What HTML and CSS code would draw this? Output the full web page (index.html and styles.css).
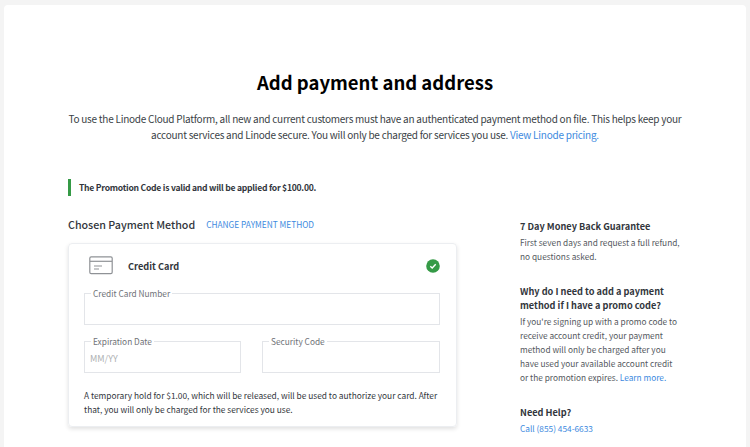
FILE: index.html
```html
<!DOCTYPE html>
<html lang="en">
<head>
<meta charset="utf-8">
<title>Add payment and address</title>
<link rel="stylesheet" href="styles.css">
</head>
<body>
<main class="sheet">
  <h1 class="title">Add payment and address</h1>
  <p class="intro">To use the Linode Cloud Platform, all new and current customers must have an authenticated payment method on file. This helps keep your account services and Linode secure. You will only be charged for services you use. <a href="#">View Linode pricing.</a></p>
  <div class="notice">The Promotion Code is valid and will be applied for $100.00.</div>
  <div class="columns">
    <section class="payment">
      <div class="payment-head">
        <h2>Chosen Payment Method</h2>
        <a href="#">CHANGE PAYMENT METHOD</a>
      </div>
      <div class="card">
        <div class="card-head">
          <svg class="card-icon" width="24" height="19" viewBox="0 0 24 19" fill="none" stroke="#8f9296" stroke-width="1.2">
            <rect x="0.8" y="0.8" width="22.4" height="16.8" rx="1.4"/>
            <path d="M1 5.3H23"/>
            <path d="M5 10H13M5 13H10"/>
          </svg>
          <span class="card-name">Credit Card</span>
          <svg class="check" width="14" height="14" viewBox="0 0 14 14">
            <circle cx="7" cy="7" r="6.8" fill="#359a46"/>
            <path d="M4.3 7.2L6.2 9L9.7 5.2" fill="none" stroke="#fff" stroke-width="1.4"/>
          </svg>
        </div>
        <fieldset class="field"><legend>Credit Card Number</legend></fieldset>
        <div class="field-row">
          <fieldset class="field"><legend>Expiration Date</legend><span class="placeholder">MM/YY</span></fieldset>
          <fieldset class="field"><legend>Security Code</legend></fieldset>
        </div>
        <p class="hold">A temporary hold for $1.00, which will be released, will be used to authorize your card. After that, you will only be charged for the services you use.</p>
      </div>
    </section>
    <aside class="side">
      <h3>7 Day Money Back Guarantee</h3>
      <p>First seven days and request a full refund, no questions asked.</p>
      <h3>Why do I need to add a payment method if I have a promo code?</h3>
      <p>If you're signing up with a promo code to receive account credit, your payment method will only be charged after you have used your available account credit or the promotion expires. <a href="#">Learn more.</a></p>
      <h3>Need Help?</h3>
      <p><a href="#">Call (855) 454-6633</a></p>
    </aside>
  </div>
</main>
</body>
</html>
```
FILE: styles.css
```css
* { box-sizing: border-box; }
html, body { height: 100%; }
body {
  margin: 0;
  padding: 5px 4px 0;
  overflow: hidden;
  background: #f4f4f4;
  color: #32363c;
  font-family: "Noto Sans CJK JP", "Source Sans Pro", "Noto Sans", sans-serif;
}
a { color: #3d8ae0; text-decoration: none; }
.sheet {
  background: #fff;
  border-radius: 4px 4px 0 0;
  min-height: 600px;
  padding: 63px 64px 0;
}
.title {
  margin: 0;
  font-size: 18.5px;
  line-height: 28px;
  font-weight: 600;
  color: #000;
  text-align: center;
}
.intro {
  margin: 15px 0 0;
  font-size: 10px;
  letter-spacing: -0.25px;
  line-height: 16px;
  text-align: center;
  color: #3a3f46;
}
.notice {
  margin-top: 36px;
  height: 17px;
  border-left: 3px solid #359a46;
  padding-left: 8px;
  font-size: 8.6px;
  letter-spacing: -0.25px;
  line-height: 17px;
  font-weight: 600;
}
.columns {
  display: flex;
  justify-content: space-between;
  margin-top: 18px;
}
.payment { width: 389px; }
.payment-head {
  display: flex;
  align-items: center;
  gap: 11px;
  height: 20px;
}
.payment-head h2 {
  margin: 0;
  font-size: 10.7px;
  font-weight: 500;
}
.payment-head a { font-size: 8.3px; }
.card {
  margin-top: 9px;
  height: 184px;
  padding: 0 16px 0 15px;
  border: 1px solid #eceef1;
  border-radius: 4px;
  box-shadow: 0 2px 4px rgba(0, 0, 0, .12);
}
.card-head {
  display: flex;
  align-items: center;
  height: 43px;
  padding-left: 5px;
}
.card-icon { display: block; }
.card-name {
  margin-left: 15px;
  font-size: 9.2px;
  font-weight: 600;
}
.check { margin-left: auto; }
.field {
  margin: 0;
  padding: 0 5px;
  height: 38px;
  border: 1px solid #e3e5e9;
  min-width: 0;
}
.field legend {
  margin-left: 1px;
  padding: 0 2px;
  font-size: 8.3px;
  line-height: 12px;
  color: #6f7277;
}
.placeholder {
  display: block;
  font-size: 9px;
  line-height: 23px;
  color: #adafb2;
}
.field-row {
  display: grid;
  grid-template-columns: 157px 178px;
  justify-content: space-between;
  margin-top: 4px;
}
.field-row .field { margin: 6px 0 0; }
.hold {
  margin: 15px 0 0;
  font-size: 8.35px;
  line-height: 14px;
}
.side { width: 162px; margin-top: 5px; }
.side h3 {
  margin: 0;
  font-size: 9.2px;
  line-height: 14px;
  font-weight: 600;
}
.side p {
  margin: 2px 0 21px;
  font-size: 8.3px;
  line-height: 14px;
  color: #54585e;
}
```
